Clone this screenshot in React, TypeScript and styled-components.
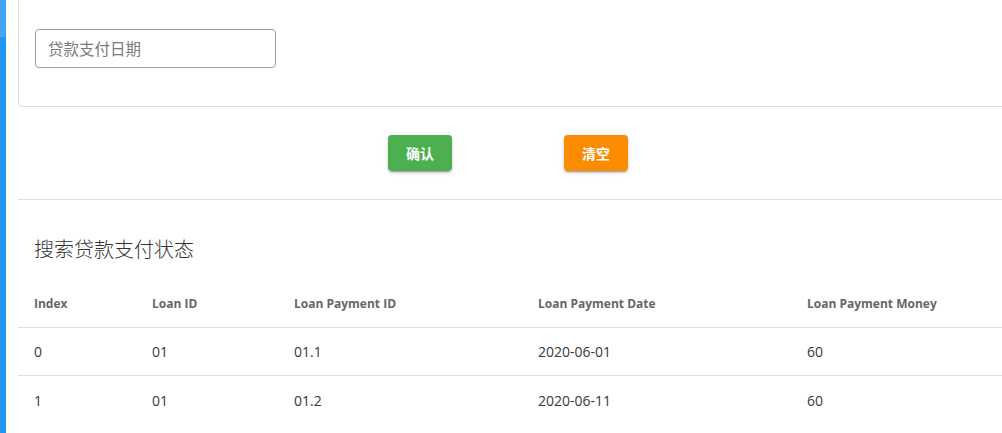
import React from "react";
import styled, { createGlobalStyle } from "styled-components";

const Global = createGlobalStyle`
  html, body { margin: 0; padding: 0; background: #fff; }
  body { font-family: "Open Sans", "Noto Sans CJK SC", sans-serif; overflow: hidden; }
  * { box-sizing: border-box; }
`;

const Page = styled.div`
  display: flex;
  width: 1002px;
  height: 433px;
  overflow: hidden;
`;

const Sidebar = styled.div`
  width: 6px;
  flex: none;
  display: flex;
  flex-direction: column;
`;

const SideTop = styled.div`
  height: 37px;
  background: #42a5f5;
`;

const SideRest = styled.div`
  flex: 1;
  background: #2196f3;
`;

const Main = styled.div`
  flex: 1;
  padding-left: 12px;
  display: flex;
  flex-direction: column;
  min-width: 0;
`;

const Card = styled.div`
  border: 1px solid #e0e0e0;
  border-top: none;
  border-right: none;
  border-radius: 0 0 0 4px;
  padding: 29px 16px 38px 16px;
`;

const Input = styled.input`
  width: 241px;
  height: 39px;
  border: 1px solid #9e9e9e;
  border-radius: 4px;
  padding: 0 12px;
  font-size: 15.5px;
  font-family: "Open Sans", "Noto Sans CJK SC", sans-serif;
  color: #333;
  outline: none;
  &::placeholder { color: #7a7a7a; }
`;

const Actions = styled.div`
  display: flex;
  justify-content: center;
  gap: 112px;
  padding: 28px 4px 28px 0;
  border-bottom: 1px solid #e0e0e0;
`;

const Button = styled.button<{ $color: string }>`
  width: 64px;
  height: 36px;
  border: none;
  border-radius: 4px;
  background: ${(p) => p.$color};
  color: #fff;
  font-weight: 700;
  font-size: 14px;
  font-family: "Open Sans", "Noto Sans CJK SC", sans-serif;
  box-shadow: 0 3px 1px -2px rgba(0,0,0,.2), 0 2px 2px 0 rgba(0,0,0,.14), 0 1px 5px 0 rgba(0,0,0,.12);
  cursor: pointer;
`;

const Title = styled.h2`
  margin: 38px 0 0 16px;
  font-size: 20px;
  line-height: 24px;
  font-weight: 300;
  color: #333;
`;

const Table = styled.div`
  margin-top: 18px;
  display: flex;
  flex-direction: column;
`;

const Row = styled.div`
  display: grid;
  grid-template-columns: 118px 142px 244px 269px 1fr;
  height: 48px;
  align-items: center;
  border-bottom: 1px solid #e0e0e0;
  &:last-child { border-bottom: none; }
`;

const Cell = styled.div<{ $head?: boolean }>`
  padding-left: 16px;
  font-size: ${(p) => (p.$head ? "12px" : "14px")};
  font-weight: ${(p) => (p.$head ? 700 : 400)};
  color: ${(p) => (p.$head ? "#666" : "#383838")};
  white-space: nowrap;
`;

const headers = ["Index", "Loan ID", "Loan Payment ID", "Loan Payment Date", "Loan Payment Money"];
const rows = [
  ["0", "01", "01.1", "2020-06-01", "60"],
  ["1", "01", "01.2", "2020-06-11", "60"],
];

export default function App() {
  return (
    <>
      <Global />
      <Page>
        <Sidebar>
          <SideTop />
          <SideRest />
        </Sidebar>
        <Main>
          <Card>
            <Input placeholder="贷款支付日期" />
          </Card>
          <Actions>
            <Button $color="#4caf50">确认</Button>
            <Button $color="#fb8c00">清空</Button>
          </Actions>
          <Title>搜索贷款支付状态</Title>
          <Table>
            <Row>
              {headers.map((h) => (
                <Cell $head key={h}>{h}</Cell>
              ))}
            </Row>
            {rows.map((r, i) => (
              <Row key={i}>
                {r.map((c, j) => (
                  <Cell key={j}>{c}</Cell>
                ))}
              </Row>
            ))}
          </Table>
        </Main>
      </Page>
    </>
  );
}
